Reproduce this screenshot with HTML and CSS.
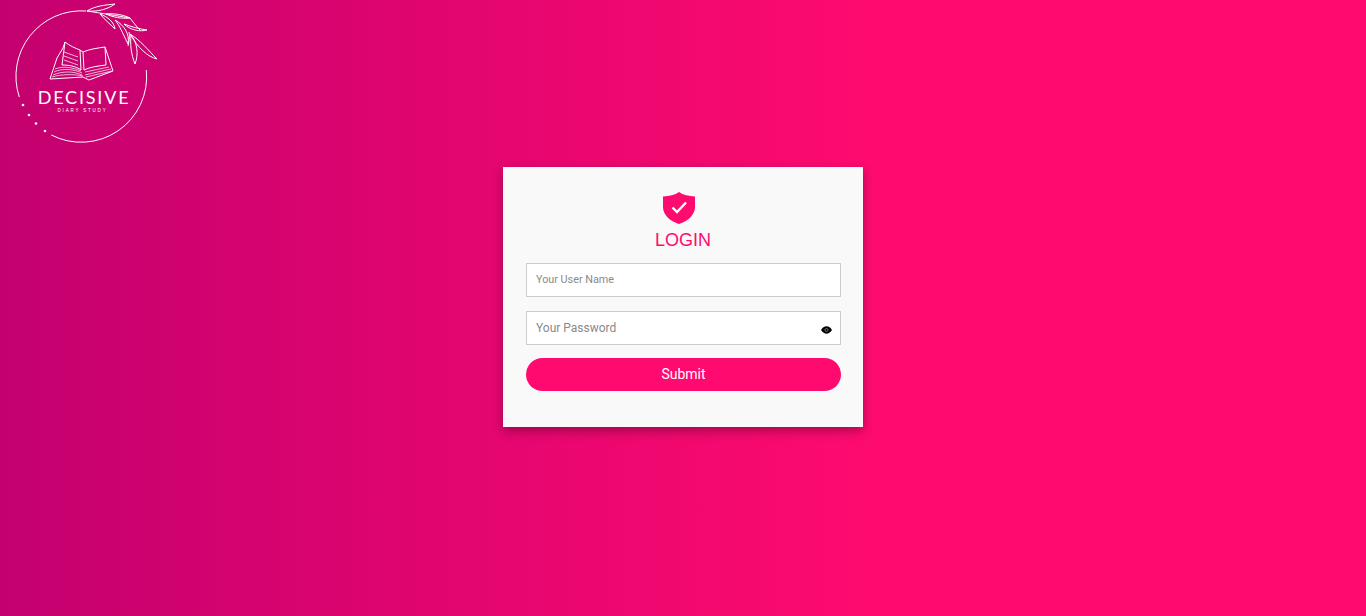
FILE: index.html
```html
<!DOCTYPE html>
<html lang="en">
<head>
<meta charset="utf-8">
<title>Login</title>
<link rel="stylesheet" href="styles.css">
</head>
<body>
<svg class="logo" viewBox="0 0 170 150" width="170" height="150" fill="none" stroke="#fff">
  <path d="M86.300 11 A65.500 65.500 0 0 0 19.300 97" stroke-width="1"/>
  <path d="M51.300 135 A65.500 65.500 0 0 0 146.300 70" stroke-width="1"/>
  <g stroke-width="1" stroke-linejoin="round">
    <path d="M87 11 C100 13 118 16 130 18 C133 22 136 26 140 30"/>
    <path d="M87 11 C95 6 105 5 115 4 C108 9 98 12 87 11Z"/>
    <path d="M100 14 C104 19 110 24 115 29 C114 22 108 17 100 14Z"/>
    <path d="M106 14 C114 13 124 15 130 18 C122 19 112 17 106 14Z"/>
    <path d="M115 20 C120 26 122 32 128 44 C130 34 124 25 115 20Z"/>
    <path d="M124 24 C132 27 140 29 147 30 C140 32 130 30 124 24Z"/>
    <path d="M129 32 C130 36 129 42 128 46"/>
    <path d="M131 35 C130 44 131 54 135 64 C139 54 137 42 131 35Z"/>
    <path d="M130 34 C140 40 148 50 157 59 C148 57 138 48 130 34Z"/>
  </g>
  <g stroke-width="1" stroke-linejoin="round">
    <path d="M50 79 L57 58 L63 48 L65 42 C70 46 75 48 80 50 L83 52 C90 49 98 48 105 47 L113 71 L89 80 L83 77 Z"/>
    <path d="M65 42 L62 65 C68 65 76 66 81 70 L80 50"/>
    <path d="M83 52 L84 70 C90 67 98 66 106 65 L105 47"/>
    <g stroke-width=".7">
      <path d="M54 72 C62 68 74 69 82 73"/>
      <path d="M53 75 C62 71 74 71 82 75"/>
      <path d="M55 69 C62 66 72 67 81 71"/>
      <path d="M52 77 C62 74 74 74 83 76"/>
      <path d="M85 72 C93 70 101 69 109 67"/>
      <path d="M85 75 C93 73 102 71 111 69"/>
      <path d="M86 77 C95 75 103 73 112 71"/>
      <path d="M64 52 L78 57 M64 56 L78 61 M64 60 L78 65"/>
    </g>
  </g>
  <g fill="#fff" stroke="none">
    <circle cx="23" cy="105" r="1.300"/>
    <circle cx="29" cy="115" r="1.300"/>
    <circle cx="36" cy="123.500" r="1.300"/>
    <circle cx="45" cy="131" r="1.300"/>
  </g>
  <text class="logo-title" x="84" y="104" text-anchor="middle">DECISIVE</text>
  <text class="logo-sub" x="82.500" y="112" text-anchor="middle">DIARY STUDY</text>
</svg>
<main class="page">
  <form class="card">
    <div class="head">
      <svg class="shield" viewBox="0 0 32 32" width="32" height="32">
        <path d="M16 0 C20 3 26 4 32 4.500 V15 C32 23 25 29 16 32 C7 29 0 23 0 15 V4.500 C6 4 12 3 16 0Z" fill="#ff0b6f"/>
        <path d="M9.500 15.500 L14 20 L23 10.500" fill="none" stroke="#fff" stroke-width="2.400"/>
      </svg>
      <h1 class="title">LOGIN</h1>
    </div>
    <div class="fields">
      <div class="field">
        <input class="input input-name" type="text" placeholder="Your User Name">
      </div>
      <div class="field">
        <input class="input input-pass" type="password" placeholder="Your Password">
        <svg class="eye" viewBox="0 0 12 8" width="11" height="8">
          <path d="M0 4 C2 1 4 0 6 0 C8 0 10 1 12 4 C10 7 8 8 6 8 C4 8 2 7 0 4Z" fill="#000"/>
          <circle cx="6" cy="4" r="1.700" fill="none" stroke="#888" stroke-width=".9"/>
        </svg>
      </div>
    </div>
    <button class="submit" type="button">Submit</button>
  </form>
</main>
</body>
</html>
```
FILE: styles.css
```css
* { box-sizing: border-box; }
html, body { height: 100%; margin: 0; }
body {
  overflow: hidden;
  font-family: Roboto, "Liberation Sans", sans-serif;
  background: linear-gradient(90deg, #c4006f 0%, #ff0b6f 65%, #ff0b6f 100%);
}
.logo { position: absolute; left: 0; top: 0; }
.logo-title {
  font-family: Lato, "Liberation Sans", sans-serif;
  font-size: 18px;
  font-weight: 400;
  letter-spacing: 1.800px;
  fill: #fff;
  stroke: none;
}
.logo-sub {
  font-family: "Liberation Sans", sans-serif;
  font-size: 4.500px;
  letter-spacing: 1.800px;
  fill: #fff;
  stroke: none;
}
.page {
  height: 100%;
  display: flex;
  justify-content: center;
  align-items: flex-start;
  padding-top: 167px;
}
.card {
  width: 360px;
  height: 260px;
  padding: 25px 22px 0 23px;
  background: #f9f9f9;
  box-shadow: 0 4px 10px rgba(0, 0, 0, .32);
}
.head { display: flex; flex-direction: column; align-items: center; padding-right: 2px; }
.shield { display: block; margin-left: -8px; }
.title {
  margin: 5px 0 0 1px;
  font-family: "Liberation Sans", sans-serif;
  font-size: 18px;
  line-height: 22px;
  font-weight: 400;
  color: #ff0b6f;
}
.fields { display: flex; flex-direction: column; gap: 14px; margin-top: 12px; }
.field { position: relative; }
.input {
  display: block;
  width: 100%;
  height: 34px;
  padding: 0 9px;
  border: 1px solid #ccc;
  border-radius: 0;
  background: #fff;
  font-family: Roboto, sans-serif;
  outline: none;
}
.input::placeholder { color: #8a8a8a; opacity: 1; }
.input-name { font-size: 10.800px; padding-bottom: 2px; }
.input-pass { font-size: 12px; }
.eye { position: absolute; right: 9px; top: 15px; }
.submit {
  display: block;
  width: 100%;
  height: 33px;
  margin-top: 13px;
  padding: 0 0 2px;
  border: 0;
  border-radius: 17px;
  background: #ff0b6f;
  color: #fff;
  font-family: Roboto, sans-serif;
  font-size: 14px;
  font-weight: 400;
}
```
